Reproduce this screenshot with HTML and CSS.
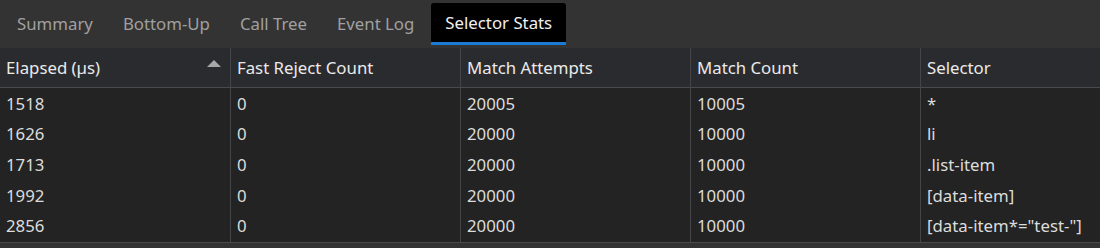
FILE: index.html
```html
<!DOCTYPE html>
<html>
<head>
<meta charset="utf-8">
<link rel="stylesheet" href="styles.css">
</head>
<body>
<div class="panel">
  <div class="tabs">
    <div class="tab">Summary</div>
    <div class="tab">Bottom-Up</div>
    <div class="tab">Call Tree</div>
    <div class="tab">Event Log</div>
    <div class="tab active">Selector Stats</div>
  </div>
  <div class="grid">
    <div class="hcell sorted"><span>Elapsed (µs)</span><span class="arrow"></span></div>
    <div class="hcell">Fast Reject Count</div>
    <div class="hcell">Match Attempts</div>
    <div class="hcell">Match Count</div>
    <div class="hcell last">Selector</div>
  </div>
  <div class="grid body">
    <div class="col"><div class="cell">1518</div><div class="cell">1626</div><div class="cell">1713</div><div class="cell">1992</div><div class="cell">2856</div></div>
    <div class="col"><div class="cell">0</div><div class="cell">0</div><div class="cell">0</div><div class="cell">0</div><div class="cell">0</div></div>
    <div class="col"><div class="cell">20005</div><div class="cell">20000</div><div class="cell">20000</div><div class="cell">20000</div><div class="cell">20000</div></div>
    <div class="col"><div class="cell">10005</div><div class="cell">10000</div><div class="cell">10000</div><div class="cell">10000</div><div class="cell">10000</div></div>
    <div class="col last"><div class="cell">*</div><div class="cell">li</div><div class="cell">.list-item</div><div class="cell">[data-item]</div><div class="cell">[data-item*="test-"]</div></div>
  </div>
</div>
</body>
</html>
```
FILE: styles.css
```css
html, body {
  margin: 0;
  padding: 0;
  background: #333333;
}
.panel {
  width: 1100px;
  height: 248px;
  background: #333333;
  font-family: "Noto Sans", "Open Sans", sans-serif;
  font-size: 16.8px;
  overflow: hidden;
}
.tabs {
  display: flex;
  align-items: flex-start;
  height: 48px;
  padding-left: 2px;
  box-sizing: border-box;
}
.tab {
  margin-top: 3px;
  height: 40px;
  padding: 0 15px;
  display: flex;
  align-items: center;
  color: #a0a0a0;
  border-bottom: 2px solid transparent;
}
.tab.active {
  background: #000000;
  color: #f0f0f0;
  border-bottom: 3px solid #1a7ad4;
  height: 39px;
  border-radius: 3px 3px 0 0;
  padding: 0 14px;
  margin-left: 2px;
}
.grid {
  display: grid;
  grid-template-columns: 231px 230px 230px 230px 1fr;
}
.hcell {
  height: 39px;
  background: #2a2b2e;
  border-right: 1px solid #444548;
  border-bottom: 1px solid #4a4a4c;
  display: flex;
  align-items: center;
  padding-left: 6px;
  color: #eaeaea;
}
.hcell.last, .col.last {
  border-right: none;
}
.hcell.sorted {
  justify-content: space-between;
  padding-right: 9px;
}
.arrow {
  width: 0;
  height: 0;
  border-left: 7px solid transparent;
  border-right: 7px solid transparent;
  border-bottom: 7px solid #a8a8a8;
  margin-top: -8px;
}
.body {
  height: 154px;
  background: #232323;
  border-bottom: 1px solid #4a4a4c;
}
.col {
  border-right: 1px solid #444548;
  display: grid;
  grid-template-rows: repeat(5, 1fr);
  padding-bottom: 1px;
}
.cell {
  display: flex;
  align-items: center;
  padding-left: 6px;
  color: #dcdcdc;
}
```
